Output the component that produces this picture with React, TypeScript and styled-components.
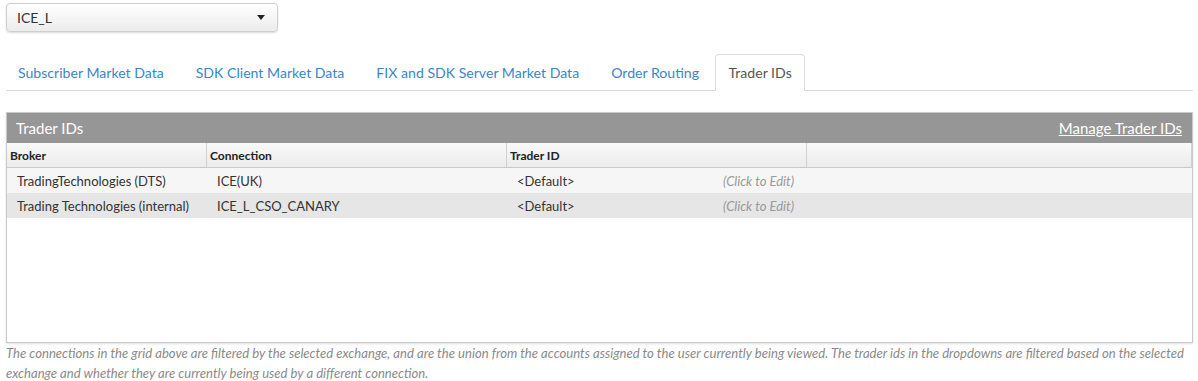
import React from 'react'
import styled, { createGlobalStyle } from 'styled-components'

const GlobalStyle = createGlobalStyle`
  body {
    margin: 0;
    background: #fff;
    font-family: Lato, 'Open Sans', sans-serif;
    color: #333;
  }
`

const Page = styled.div`
  padding: 3px 5px 0 6px;
`

const Select = styled.div`
  width: 272px;
  height: 29px;
  box-sizing: border-box;
  display: flex;
  align-items: center;
  justify-content: space-between;
  padding: 0 10px 0 10px;
  border: 1px solid #cfcfcf;
  border-radius: 4px;
  background: linear-gradient(#ffffff, #ececec);
  box-shadow: 0 1px 2px rgba(0, 0, 0, 0.15);
  font-size: 14px;
  color: #333;
`

const Caret = styled.span`
  width: 0;
  height: 0;
  border-left: 4px solid transparent;
  border-right: 4px solid transparent;
  border-top: 5px solid #222;
  margin-right: 2px;
`

const TabBar = styled.div`
  display: flex;
  margin-top: 22px;
  border-bottom: 1px solid #dcdcdc;
  height: 36px;
`

const Tab = styled.div<{ $active?: boolean }>`
  box-sizing: border-box;
  display: flex;
  align-items: center;
  padding: 0 ${({ $active }) => ($active ? '12.5px' : '15px')};
  font-size: 14.1px;
  color: ${({ $active }) => ($active ? '#555' : '#3a86c8')};
  background: #fff;
  border: 1px solid ${({ $active }) => ($active ? '#dcdcdc' : 'transparent')};
  border-bottom-color: ${({ $active }) => ($active ? '#fff' : 'transparent')};
  border-radius: 4px 4px 0 0;
  margin-bottom: ${({ $active }) => ($active ? '-1px' : '0')};
  height: ${({ $active }) => ($active ? '37px' : '36px')};
  &:first-child {
    padding-left: 11px;
  }
`

const Panel = styled.div`
  margin-top: 21px;
  height: 231px;
  box-sizing: border-box;
  border: 1px solid #c9c9c9;
  box-shadow: 0 1px 2px rgba(0, 0, 0, 0.12);
  display: flex;
  flex-direction: column;
`

const PanelHeader = styled.div`
  height: 30px;
  flex: none;
  display: flex;
  align-items: center;
  justify-content: space-between;
  padding: 0 10px 0 9px;
  background: #969696;
  color: #fff;
  font-size: 15px;
`

const ManageLink = styled.a`
  color: #fff;
  text-decoration: underline;
  font-size: 15px;
`

const Grid = styled.div`
  display: grid;
  grid-template-columns: 200px 300px 300px 1fr;
`

const HeadCell = styled.div`
  height: 25px;
  box-sizing: border-box;
  display: flex;
  align-items: center;
  padding: 0 4px 0 3px;
  font-size: 12px;
  font-weight: bold;
  color: #222;
  background: linear-gradient(#f9f9f9, #ececec);
  border-right: 1px solid #d0d0d0;
  border-bottom: 1px solid #c9c9c9;
  &:last-child {
    border-right: none;
  }
`

const Cell = styled.div<{ $odd?: boolean }>`
  height: 25px;
  display: flex;
  align-items: center;
  justify-content: space-between;
  padding: 0 13px 0 10px;
  font-size: 13px;
  color: #333;
  background: ${({ $odd }) => ($odd ? '#e6e6e6' : '#f6f6f6')};
`

const EditHint = styled.span`
  font-style: italic;
  color: #999;
`

const Note = styled.p`
  margin: 0;
  font-size: 13.1px;
  line-height: 20px;
  font-style: italic;
  color: #8a8a8a;
`

const tabs = ['Subscriber Market Data', 'SDK Client Market Data', 'FIX and SDK Server Market Data', 'Order Routing', 'Trader IDs']

const rows = [
  { broker: 'TradingTechnologies (DTS)', connection: 'ICE(UK)', trader: '<Default>' },
  { broker: 'Trading Technologies (internal)', connection: 'ICE_L_CSO_CANARY', trader: '<Default>' },
]

const App: React.FC = () => (
  <Page>
    <GlobalStyle />
    <Select>
      <span>ICE_L</span>
      <Caret />
    </Select>
    <TabBar>
      {tabs.map((t) => (
        <Tab key={t} $active={t === 'Trader IDs'}>
          {t}
        </Tab>
      ))}
    </TabBar>
    <Panel>
      <PanelHeader>
        <span>Trader IDs</span>
        <ManageLink href="#">Manage Trader IDs</ManageLink>
      </PanelHeader>
      <Grid>
        <HeadCell>Broker</HeadCell>
        <HeadCell>Connection</HeadCell>
        <HeadCell>Trader ID</HeadCell>
        <HeadCell />
        {rows.map((r, i) => (
          <React.Fragment key={r.broker}>
            <Cell $odd={i % 2 === 1}>{r.broker}</Cell>
            <Cell $odd={i % 2 === 1}>{r.connection}</Cell>
            <Cell $odd={i % 2 === 1}>
              <span>{r.trader}</span>
              <EditHint>(Click to Edit)</EditHint>
            </Cell>
            <Cell $odd={i % 2 === 1} />
          </React.Fragment>
        ))}
      </Grid>
    </Panel>
    <Note>
      The connections in the grid above are filtered by the selected exchange, and are the union from the accounts
      assigned to the user currently being viewed. The trader ids in the dropdowns are filtered based on the selected
      exchange and whether they are currently being used by a different connection.
    </Note>
  </Page>
)

export default App
